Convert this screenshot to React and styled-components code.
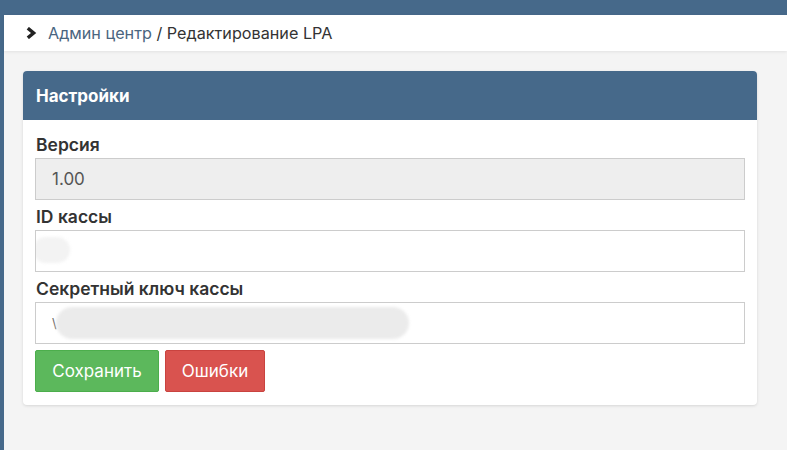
import React from "react";
import styled, { createGlobalStyle } from "styled-components";

const Global = createGlobalStyle`
  html, body { margin: 0; padding: 0; }
  body {
    background: #46698a;
    font-family: Inter, "Noto Sans", sans-serif;
    color: #333;
  }
`;

const Page = styled.div`
  width: 787px;
  height: 450px;
  box-sizing: border-box;
  padding: 15px 0 0 4px;
  background: #46698a;
  overflow: hidden;
`;

const Main = styled.div`
  height: 100%;
  background: #f4f4f4;
  display: flex;
  flex-direction: column;
`;

const Breadcrumb = styled.div`
  height: 36px;
  background: #fff;
  display: flex;
  align-items: center;
  padding-left: 21px;
  gap: 11px;
  font-size: 16.2px;
  box-shadow: 0 1px 3px rgba(0, 0, 0, 0.08);
  position: relative;
`;

const Crumbs = styled.div`
  color: #333;
  white-space: nowrap;
`;

const CrumbLink = styled.span`
  color: #4a6580;
`;

const Content = styled.div`
  padding: 20px 30px 0 19px;
`;

const Card = styled.div`
  background: #fff;
  border-radius: 4px;
  box-shadow: 0 1px 3px rgba(0, 0, 0, 0.12);
`;

const CardHeader = styled.div`
  height: 49px;
  background: #46698a;
  border-radius: 4px 4px 0 0;
  display: flex;
  align-items: center;
  padding-left: 13px;
  color: #fff;
  font-weight: 700;
  font-size: 17px;
`;

const CardBody = styled.div`
  padding: 14px 12px 13px 12px;
`;

const Group = styled.div`
  margin-bottom: 6px;
`;

const Label = styled.div`
  font-size: 17.5px;
  font-weight: 600;
  line-height: 22px;
  margin-bottom: 2px;
  padding-left: 1px;
  color: #333;
`;

const Field = styled.div`
  position: relative;
  height: 42px;
  box-sizing: border-box;
  border: 1px solid #ccc;
  background: ${(p) => (p.$disabled ? "#eee" : "#fff")};
  display: flex;
  align-items: center;
  padding-left: 16px;
  font-size: 17px;
  color: #555;
  overflow: hidden;
`;

const Blur = styled.div`
  position: absolute;
  left: ${(p) => p.$left}px;
  top: ${(p) => p.$top}px;
  width: ${(p) => p.$w}px;
  height: ${(p) => p.$h}px;
  border-radius: ${(p) => p.$h / 2}px;
  background: ${(p) => p.$bg};
  filter: blur(1.5px);
`;

const Slash = styled.span`
  color: #666;
  font-size: 13px;
`;

const Buttons = styled.div`
  display: flex;
  gap: 6px;
  margin-top: 3px;
`;

const Button = styled.button`
  height: 42px;
  box-sizing: border-box;
  padding: 0;
  border: 1px solid ${(p) => (p.$variant === "danger" ? "#c9433f" : "#4cae4c")};
  background: ${(p) => (p.$variant === "danger" ? "#d9534f" : "#5cb85c")};
  color: #fff;
  font-family: Inter, "Noto Sans", sans-serif;
  font-size: 17px;
  border-radius: 2px;
  width: ${(p) => p.$w}px;
`;

function Chevron() {
  return (
    <svg width="12" height="12" viewBox="0 0 12 12">
      <path d="M2.8 1.2 L8.6 6 L2.8 10.8" fill="none" stroke="#222" strokeWidth="3.4" strokeLinejoin="miter" />
    </svg>
  );
}

export default function App() {
  return (
    <>
      <Global />
      <Page>
        <Main>
          <Breadcrumb>
            <Chevron />
            <Crumbs>
              <CrumbLink>Админ центр</CrumbLink> / Редактирование LPA
            </Crumbs>
          </Breadcrumb>
          <Content>
            <Card>
              <CardHeader>Настройки</CardHeader>
              <CardBody>
                <Group>
                  <Label>Версия</Label>
                  <Field $disabled>1.00</Field>
                </Group>
                <Group>
                  <Label>ID кассы</Label>
                  <Field>
                    <Blur $left={-3} $top={6} $w={37} $h={26} $bg="#f3f3f3" />
                  </Field>
                </Group>
                <Group>
                  <Label>Секретный ключ кассы</Label>
                  <Field>
                    <Slash>\</Slash>
                    <Blur $left={20} $top={4} $w={353} $h={32} $bg="#ebebeb" />
                  </Field>
                </Group>
                <Buttons>
                  <Button $w={124}>Сохранить</Button>
                  <Button $w={100} $variant="danger">Ошибки</Button>
                </Buttons>
              </CardBody>
            </Card>
          </Content>
        </Main>
      </Page>
    </>
  );
}
